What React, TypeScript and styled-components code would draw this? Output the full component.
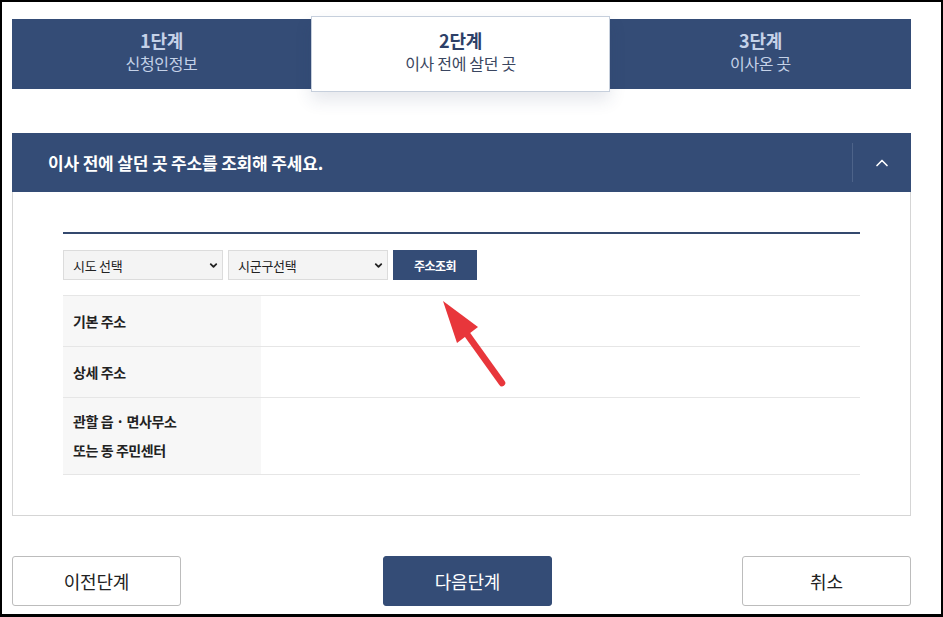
import React from 'react';
import styled, { createGlobalStyle } from 'styled-components';
import { ChevronDown, ChevronUp } from 'lucide-react';

const GlobalStyle = createGlobalStyle`
  * { box-sizing: border-box; }
  html, body {
    margin: 0;
    padding: 0;
    background: #fff;
  }
  body {
    font-family: "Malgun Gothic", "Noto Sans CJK KR", "Noto Sans", sans-serif;
    color: #222;
  }
  #root {
    width: 943px;
    height: 617px;
    border-style: solid;
    border-color: #000;
    border-width: 2px 2px 3px 2px;
    overflow: hidden;
  }
`;

const Page = styled.div`
  position: relative;
  width: 899px;
  margin-left: 10px;
  padding-top: 17px;
`;

const Steps = styled.div`
  display: grid;
  grid-template-columns: 299px 299px 301px;
  height: 70px;
  background: #344c76;
`;

const Step = styled.div<{ active?: boolean }>`
  display: flex;
  flex-direction: column;
  align-items: center;
  justify-content: center;
  padding-bottom: 4px;
  letter-spacing: -0.02em;
  ${p => p.active ? `
    margin: -3px 0;
    background: #fff;
    border: 1px solid #c6cfdc;
    box-shadow: 0 8px 16px rgba(40, 60, 100, 0.12);
    position: relative;
    z-index: 1;
  ` : ''}
`;

const StepNo = styled.div<{ active?: boolean }>`
  font-size: 18px;
  font-weight: 700;
  line-height: 23px;
  color: ${p => p.active ? '#2d4068' : '#c5d2e8'};
`;

const StepName = styled.div<{ active?: boolean }>`
  font-size: 16px;
  line-height: 23px;
  color: ${p => p.active ? '#3a4660' : '#c5d2e8'};
`;

const Section = styled.div`
  margin-top: 44px;
`;

const SectionHeader = styled.div`
  display: flex;
  align-items: center;
  height: 59px;
  background: #344c76;
  color: #fff;
`;

const SectionTitle = styled.h2`
  flex: 1;
  margin: 0;
  padding-left: 36px;
  font-size: 17px;
  font-weight: 700;
  letter-spacing: -0.01em;
`;

const Divider = styled.div`
  width: 1px;
  height: 39px;
  background: #4d6389;
`;

const ToggleButton = styled.button`
  width: 58px;
  height: 59px;
  display: flex;
  align-items: center;
  justify-content: center;
  background: transparent;
  border: none;
  color: #fff;
  padding: 0;
  cursor: pointer;
`;

const SectionBody = styled.div`
  border: 1px solid #d5d5d5;
  border-top: none;
  padding: 40px 50px 40px 50px;
`;

const ThickRule = styled.div`
  height: 2px;
  background: #34496e;
`;

const SearchRow = styled.div`
  display: flex;
  gap: 5px;
  margin-top: 16px;
  height: 30px;
`;

const SelectBox = styled.div`
  width: 160px;
  display: flex;
  align-items: center;
  justify-content: space-between;
  padding: 0 3px 0 9px;
  background: #f4f4f4;
  border: 1px solid #dcdcdc;
  font-size: 13px;
  color: #222;
  letter-spacing: -0.02em;
`;

const SearchButton = styled.button`
  width: 84px;
  background: #344c76;
  border: none;
  color: #fff;
  font-family: inherit;
  font-size: 12px;
  font-weight: 700;
  letter-spacing: -0.04em;
  cursor: pointer;
`;

const InfoTable = styled.div`
  margin-top: 15px;
  border-top: 1px solid #e6e6e6;
`;

const InfoRow = styled.div<{ tall?: boolean }>`
  display: grid;
  grid-template-columns: 198px 1fr;
  min-height: ${p => p.tall ? '77px' : '51px'};
  border-bottom: 1px solid #e6e6e6;
`;

const InfoLabel = styled.div`
  display: flex;
  align-items: center;
  padding-left: 10px;
  background: #f7f7f7;
  font-size: 14px;
  font-weight: 700;
  line-height: 29px;
  letter-spacing: -0.03em;
  color: #222;
`;

const InfoValue = styled.div`
  background: #fff;
`;

const Actions = styled.div`
  display: flex;
  justify-content: space-between;
  margin-top: 40px;
`;

const ActionButton = styled.button<{ primary?: boolean }>`
  width: 169px;
  height: 50px;
  border-radius: 3px;
  font-family: inherit;
  font-size: 18px;
  letter-spacing: -0.01em;
  cursor: pointer;
  background: ${p => p.primary ? '#344c76' : '#fff'};
  color: ${p => p.primary ? '#fff' : '#222'};
  border: 1px solid ${p => p.primary ? '#344c76' : '#bcbcbc'};
  margin-left: ${p => p.primary ? '12px' : '0'};
`;

const Pointer = styled.svg`
  position: absolute;
  left: 418px;
  top: 281px;
  pointer-events: none;
`;

const steps = [
  { no: '1단계', name: '신청인정보' },
  { no: '2단계', name: '이사 전에 살던 곳' },
  { no: '3단계', name: '이사온 곳' },
];

const rows = [
  { label: ['기본 주소'] },
  { label: ['상세 주소'] },
  { label: ['관할 읍 · 면사무소', '또는 동 주민센터'], tall: true },
];

const App: React.FC = () => {
  const current = 1;

  return (
    <>
      <GlobalStyle />
      <Page>
        <Steps>
          {steps.map((s, i) => (
            <Step key={s.no} active={i === current}>
              <StepNo active={i === current}>{s.no}</StepNo>
              <StepName active={i === current}>{s.name}</StepName>
            </Step>
          ))}
        </Steps>

        <Section>
          <SectionHeader>
            <SectionTitle>이사 전에 살던 곳 주소를 조회해 주세요.</SectionTitle>
            <Divider />
            <ToggleButton aria-label="접기">
              <ChevronUp size={20} strokeWidth={2} />
            </ToggleButton>
          </SectionHeader>
          <SectionBody>
            <ThickRule />
            <SearchRow>
              <SelectBox>
                <span>시도 선택</span>
                <ChevronDown size={11} strokeWidth={4} />
              </SelectBox>
              <SelectBox>
                <span>시군구선택</span>
                <ChevronDown size={11} strokeWidth={4} />
              </SelectBox>
              <SearchButton>주소조회</SearchButton>
            </SearchRow>
            <InfoTable>
              {rows.map(r => (
                <InfoRow key={r.label[0]} tall={r.tall}>
                  <InfoLabel>
                    <div>
                      {r.label.map(l => <div key={l}>{l}</div>)}
                    </div>
                  </InfoLabel>
                  <InfoValue />
                </InfoRow>
              ))}
            </InfoTable>
          </SectionBody>
        </Section>

        <Actions>
          <ActionButton>이전단계</ActionButton>
          <ActionButton primary>다음단계</ActionButton>
          <ActionButton>취소</ActionButton>
        </Actions>

        {/* red annotation arrow pointing at the search button */}
        <Pointer width="90" height="110" viewBox="0 0 90 110">
          <line x1="72" y1="100" x2="34" y2="47" stroke="#e8363b" strokeWidth="6.5" strokeLinecap="round" />
          <polygon points="13,18 27,60 48,44" fill="#e8363b" />
        </Pointer>
      </Page>
    </>
  );
};

export default App;
